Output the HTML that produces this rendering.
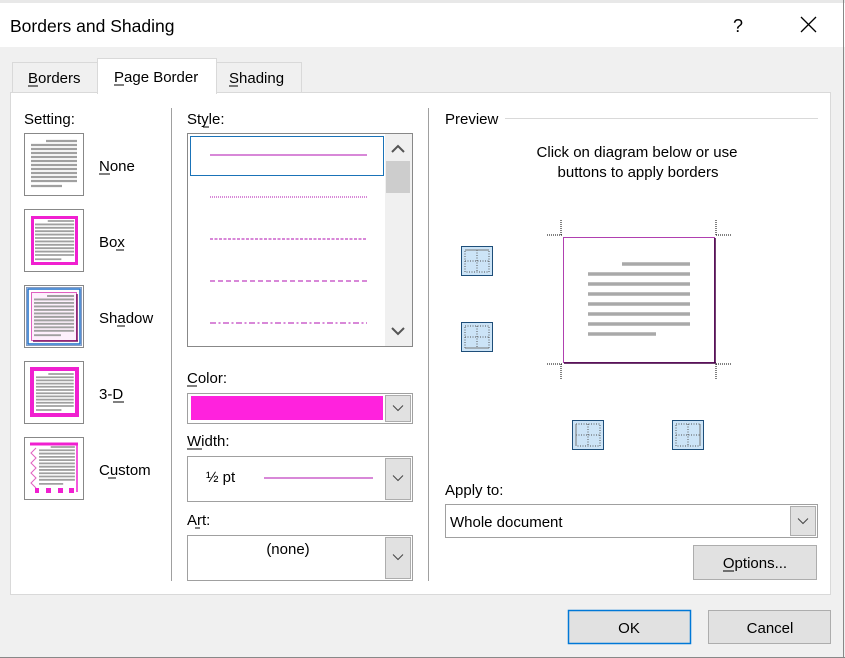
<!DOCTYPE html>
<html><head><meta charset="utf-8"><style>
html,body{margin:0;padding:0;width:845px;height:658px;overflow:hidden;background:#f0f0f0}
svg{display:block}
text{font-family:"Liberation Sans",sans-serif;font-size:15px;fill:#000}
</style></head><body>
<svg width="845" height="658" viewBox="0 0 845 658" xmlns="http://www.w3.org/2000/svg">
<defs>
<g id="tl" stroke="#a0a0a0" stroke-width="2.2">
<line x1="15" y1="0" x2="46" y2="0"/><line x1="0" y1="4" x2="46" y2="4"/><line x1="0" y1="8" x2="46" y2="8"/><line x1="0" y1="12" x2="46" y2="12"/><line x1="0" y1="16" x2="46" y2="16"/><line x1="0" y1="20" x2="46" y2="20"/><line x1="0" y1="24" x2="46" y2="24"/><line x1="0" y1="28" x2="46" y2="28"/><line x1="0" y1="32" x2="46" y2="32"/><line x1="0" y1="36" x2="46" y2="36"/><line x1="0" y1="40" x2="46" y2="40"/><line x1="0" y1="45" x2="31" y2="45"/>
</g>
<g id="cell"><rect x="0.5" y="0.5" width="31" height="29" fill="#cce4f7" stroke="#1e4e79"/><path d="M4 4h24v22H4zM16 4v22M4 15h24" fill="none" stroke="#555" stroke-dasharray="1 1.5"/></g>
<path id="chev" d="M-5 -2.5l5 5 5-5" fill="none" stroke="#444"/>
</defs>
<rect x="0" y="0" width="845" height="47" fill="#fff"/>
<rect x="0" y="0" width="845" height="3" fill="#e8e8e8"/>
<text x="10" y="32" style="font-size:17.5px">Borders and Shading</text>
<text x="733" y="32" style="font-size:18px">?</text>
<path d="M801 17l15 15M816 17l-15 15" stroke="#000" stroke-width="1.3"/>
<line x1="843.5" y1="0" x2="843.5" y2="658" stroke="#888"/>
<rect x="12.5" y="62.5" width="85" height="30" fill="#f0f0f0" stroke="#d9d9d9"/>
<rect x="216.5" y="62.5" width="85" height="30" fill="#f0f0f0" stroke="#d9d9d9"/>
<text x="28" y="83">Borders</text><line x1="28" y1="86" x2="38" y2="86" stroke="#000"/>
<text x="229" y="83">Shading</text><line x1="229" y1="86" x2="238" y2="86" stroke="#000"/>
<rect x="10.5" y="92.5" width="820" height="502" fill="#fff" stroke="#d9d9d9"/>
<rect x="97.5" y="58.5" width="119" height="35" fill="#fff" stroke="#d9d9d9"/>
<rect x="98" y="91" width="118" height="4" fill="#fff"/>
<text x="114" y="82">Page Border</text><line x1="114" y1="85" x2="124" y2="85" stroke="#000"/>
<line x1="171.5" y1="108" x2="171.5" y2="581" stroke="#a0a0a0"/>
<line x1="428.5" y1="108" x2="428.5" y2="581" stroke="#a0a0a0"/>
<text x="24" y="124">Setting:</text>
<rect x="24.5" y="133.5" width="59" height="62" fill="#fff" stroke="#888"/>
<use href="#tl" x="31" y="141"/>
<text x="99" y="171">None</text><line x1="99" y1="174" x2="110" y2="174" stroke="#000"/>
<rect x="24.5" y="209.5" width="59" height="62" fill="#fff" stroke="#888"/>
<rect x="32.5" y="217.5" width="44" height="46" fill="none" stroke="#f020d0" stroke-width="3"/>
<use href="#tl" transform="translate(35,221) scale(0.85,0.85)"/>
<text x="99" y="247">Box</text><line x1="116" y1="250" x2="124" y2="250" stroke="#000"/>
<rect x="24.5" y="285.5" width="59" height="62" fill="#fff" stroke="#888"/>
<rect x="26.5" y="287.5" width="55" height="58" fill="none" stroke="#0b3a86" stroke-width="1" stroke-dasharray="1 1"/>
<rect x="28" y="289" width="52" height="55" fill="none" stroke="#1e6fc9" stroke-width="1.5"/>
<rect x="31.5" y="292.5" width="45" height="48" fill="#fdf0fc" stroke="#e060c0"/>
<line x1="77" y1="294" x2="77" y2="341" stroke="#7a1060" stroke-width="1.5"/><line x1="33" y1="341" x2="78" y2="341" stroke="#7a1060" stroke-width="1.5"/>
<use href="#tl" transform="translate(34,296) scale(0.87,0.87)"/>
<text x="99" y="323">Shadow</text><line x1="117" y1="326" x2="125" y2="326" stroke="#000"/>
<rect x="24.5" y="361.5" width="59" height="62" fill="#fff" stroke="#888"/>
<rect x="32" y="369" width="45" height="46" fill="none" stroke="#f020d0" stroke-width="4"/>
<rect x="34.5" y="371.5" width="40" height="41" fill="none" stroke="#fff" stroke-width="1"/>
<use href="#tl" transform="translate(36,374) scale(0.82,0.8)"/>
<text x="99" y="399">3-D</text><line x1="113" y1="402" x2="124" y2="402" stroke="#000"/>
<rect x="24.5" y="437.5" width="59" height="62" fill="#fff" stroke="#888"/>
<line x1="30" y1="444" x2="78" y2="444" stroke="#f020d0" stroke-width="3"/>
<line x1="77" y1="444" x2="77" y2="492" stroke="#f020d0" stroke-width="1.5"/>
<path d="M36 448l-5 5 5 5-5 5 5 5-5 5 5 5-5 5 5 5" fill="none" stroke="#e060c0"/>
<path d="M35 488h4v5h-4zM46 488h5v5h-5zM58 488h5v5h-5zM69 488h5v5h-5z" fill="#f020d0"/>
<use href="#tl" transform="translate(39,447) scale(0.78,0.82)"/>
<text x="99" y="475">Custom</text><line x1="108" y1="478" x2="116" y2="478" stroke="#000"/>
<text x="187" y="124">Style:</text><line x1="203" y1="127" x2="209" y2="127" stroke="#000"/>
<rect x="187.5" y="133.5" width="225" height="213" fill="#fff" stroke="#888"/>
<rect x="190.5" y="136.5" width="193" height="39" fill="#fff" stroke="#1a73b8"/>
<rect x="385" y="134" width="27" height="212" fill="#f0f0f0"/>
<rect x="386" y="161" width="24" height="32" fill="#cdcdcd"/>
<path d="M392 152l6-6 6 6" fill="none" stroke="#555" stroke-width="2"/>
<path d="M392 328l6 6 6-6" fill="none" stroke="#555" stroke-width="2"/>
<g stroke="#c040c0" stroke-width="1.2">
<line x1="210" y1="155" x2="367" y2="155"/>
<line x1="210" y1="197" x2="367" y2="197" stroke-dasharray="1 1"/>
<line x1="210" y1="239" x2="367" y2="239" stroke-dasharray="3 1.5"/>
<line x1="210" y1="281" x2="367" y2="281" stroke-dasharray="5 3"/>
<line x1="210" y1="323" x2="367" y2="323" stroke-dasharray="6 2.5 2 2.5"/>
</g>
<text x="187" y="383">Color:</text><line x1="187" y1="386" x2="197" y2="386" stroke="#000"/>
<rect x="187.5" y="393.5" width="225" height="30" fill="#fff" stroke="#a0a0a0"/>
<rect x="191" y="396" width="192" height="24" fill="#ff22dd"/>
<rect x="385.5" y="395.5" width="25" height="26" fill="#e1e1e1" stroke="#adadad"/>
<use href="#chev" x="398" y="408"/>
<text x="187" y="446">Width:</text><line x1="187" y1="449" x2="202" y2="449" stroke="#000"/>
<rect x="187.5" y="456.5" width="225" height="45" fill="#fff" stroke="#a0a0a0"/>
<text x="206" y="482">½ pt</text>
<line x1="264" y1="478" x2="373" y2="478" stroke="#c040c0" stroke-width="1.2"/>
<rect x="385.5" y="458.5" width="25" height="41" fill="#e1e1e1" stroke="#adadad"/>
<use href="#chev" x="398" y="478"/>
<text x="187" y="525">Art:</text><line x1="195" y1="528" x2="200" y2="528" stroke="#000"/>
<rect x="187.5" y="535.5" width="225" height="45" fill="#fff" stroke="#a0a0a0"/>
<text x="288" y="554" text-anchor="middle">(none)</text>
<rect x="385.5" y="537.5" width="25" height="41" fill="#e1e1e1" stroke="#adadad"/>
<use href="#chev" x="398" y="557"/>
<text x="445" y="124">Preview</text>
<line x1="505" y1="118.5" x2="818" y2="118.5" stroke="#d9d9d9"/>
<text x="637" y="157" text-anchor="middle">Click on diagram below or use</text>
<text x="638" y="177" text-anchor="middle">buttons to apply borders</text>
<g stroke="#000" stroke-dasharray="1 1">
<path d="M547 235h15M561 220v16M716 235h15M716 220v16M547 364h15M561 364v15M716 364h15M716 364v15"/>
</g>
<rect x="563.5" y="237.5" width="151" height="125" fill="#fff" stroke="#b040b0"/>
<line x1="715" y1="238" x2="715" y2="363" stroke="#400040" stroke-width="1.5"/>
<line x1="564" y1="363" x2="716" y2="363" stroke="#400040" stroke-width="1.5"/>
<g stroke="#a9a9a9" stroke-width="3.5">
<line x1="622" y1="264" x2="690" y2="264"/><line x1="588" y1="274" x2="690" y2="274"/><line x1="588" y1="284" x2="690" y2="284"/><line x1="588" y1="294" x2="690" y2="294"/><line x1="588" y1="304" x2="690" y2="304"/><line x1="588" y1="314" x2="690" y2="314"/><line x1="588" y1="324" x2="690" y2="324"/><line x1="588" y1="334" x2="656" y2="334"/>
</g>
<use href="#cell" x="461" y="246"/>
<line x1="465" y1="250" x2="489" y2="250" stroke="#777"/>
<use href="#cell" x="461" y="322"/>
<line x1="465" y1="348" x2="489" y2="348" stroke="#777"/>
<use href="#cell" x="572" y="420"/>
<line x1="576" y1="424" x2="576" y2="446" stroke="#777"/>
<use href="#cell" x="672" y="420"/>
<line x1="700" y1="424" x2="700" y2="446" stroke="#777"/>
<text x="445" y="495">Apply to:</text>
<rect x="445.5" y="504.5" width="372" height="33" fill="#fff" stroke="#a0a0a0"/>
<text x="450" y="527">Whole document</text>
<rect x="790.5" y="506.5" width="25" height="29" fill="#e1e1e1" stroke="#adadad"/>
<use href="#chev" x="803" y="521"/>
<rect x="693.5" y="545.5" width="123" height="34" fill="#e1e1e1" stroke="#adadad"/>
<text x="755" y="568" text-anchor="middle">Options...</text><line x1="723" y1="571" x2="734" y2="571" stroke="#000"/>
<rect x="568.5" y="610.5" width="122" height="33" fill="#e1e1e1" stroke="#0078d7" stroke-width="1.5"/>
<text x="629" y="633" text-anchor="middle">OK</text>
<rect x="708.5" y="610.5" width="122" height="33" fill="#e1e1e1" stroke="#adadad"/>
<text x="770" y="633" text-anchor="middle">Cancel</text>
<line x1="0" y1="657.5" x2="845" y2="657.5" stroke="#888"/>
</svg>
</body></html>
